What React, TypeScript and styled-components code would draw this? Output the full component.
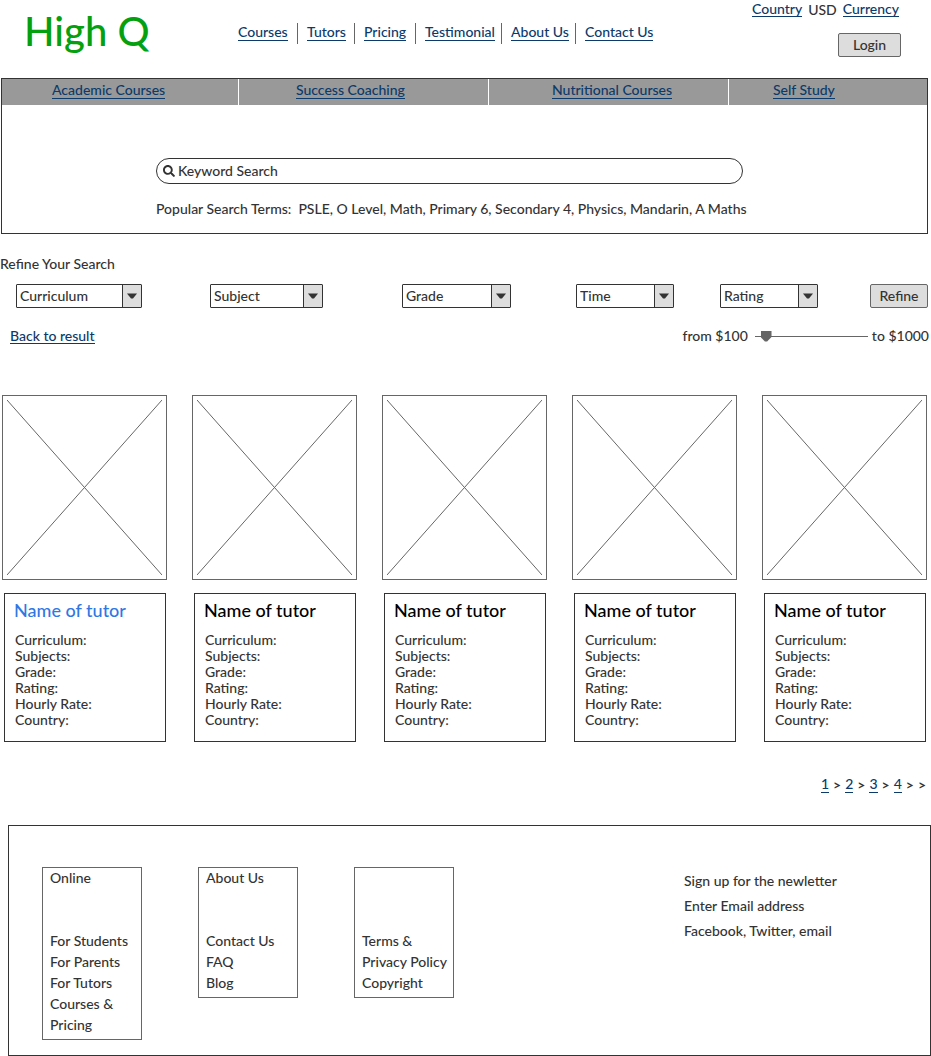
import React from "react";
import styled, { createGlobalStyle } from "styled-components";
import { FaSearch } from "react-icons/fa";

const ink = "#333333";
const line = "#666666";
const link = "#0b3a6b";
const fill = "#dddddd";

const GlobalStyle = createGlobalStyle`
  * { box-sizing: border-box; }
  body {
    margin: 0;
    background: #ffffff;
    color: ${ink};
    font-family: Lato, "Liberation Sans", sans-serif;
    font-size: 14px;
    font-weight: 500;
    line-height: 16px;
  }
  button, input, select { font: inherit; color: inherit; }
  ul { list-style: none; margin: 0; padding: 0; }
  h1, h2, h3, p { margin: 0; font-size: inherit; font-weight: inherit; }
`;

const Link = styled.a`
  color: ${link};
  text-decoration: none;
  border-bottom: 1px solid ${link};
  line-height: 14px;
  white-space: nowrap;
`;

const PlainLink = styled.a`
  color: inherit;
  text-decoration: none;
`;

const Button = styled.button<{ $width: number }>`
  width: ${(p) => p.$width}px;
  height: 24px;
  padding: 0;
  border: 1px solid ${line};
  border-radius: 2px;
  background: ${fill};
  line-height: 20px;
`;

const Header = styled.header`
  display: grid;
  grid-template-columns: 238px 1fr auto;
  height: 78px;
`;

const Logo = styled.h1`
  padding: 8px 0 0 24px;
  color: #05a010;
  font-size: 40px;
  line-height: 46px;
`;

const MainNav = styled.ul`
  display: grid;
  grid-template-columns: 60px 57px 61px 86px 74px auto;
  justify-content: start;
  padding-top: 23px;
`;

const MainNavItem = styled.li`
  height: 21px;
  padding-left: 9px;
  line-height: 18px;
  border-right: 1px solid ${line};
  &:first-child { padding-left: 0; }
  &:last-child { border-right: 0; }
`;

const Account = styled.div`
  display: flex;
  flex-direction: column;
  align-items: flex-end;
  gap: 15px;
  padding: 1px 30px 0 0;
`;

const Locale = styled.div`
  display: flex;
  align-items: center;
  gap: 6px;
  height: 17px;
  padding-right: 2px;
`;

const Hero = styled.section`
  margin: 0 3px 0 1px;
  height: 156px;
  border: 1px solid ${ink};
`;

const CategoryBar = styled.ul`
  display: grid;
  grid-template-columns: 237fr 250fr 240fr 198fr;
  height: 26px;
  background: #999999;
`;

const Category = styled.li<{ $inset: number }>`
  padding-left: ${(p) => p.$inset}px;
  line-height: 22px;
  border-right: 1px solid #ffffff;
  &:last-child { border-right: 0; }
`;

const SearchArea = styled.form`
  display: flex;
  flex-direction: column;
  gap: 17px;
  padding: 53px 184px 0 154px;
`;

const SearchBox = styled.label`
  display: flex;
  align-items: center;
  gap: 3px;
  height: 26px;
  padding: 0 12px 1px 6px;
  border: 1px solid ${ink};
  border-radius: 13px;
`;

const BareInput = styled.input`
  flex: 1;
  min-width: 0;
  padding: 0;
  border: 0;
  outline: 0;
  background: transparent;
  &::placeholder { color: ${ink}; opacity: 1; }
`;

const Terms = styled.p`
  white-space: pre;
`;

const Filters = styled.form`
  padding-top: 22px;
`;

const FilterRow = styled.div`
  display: grid;
  grid-template-columns: 194fr 192fr 174fr 144fr 150fr 58px;
  margin: 12px 3px 0 16px;
`;

const SelectBox = styled.div<{ $width: number }>`
  display: grid;
  grid-template-columns: 1fr 20px;
  width: ${(p) => p.$width}px;
  height: 24px;
  border: 1px solid ${ink};
  border-radius: 1px;
  background: linear-gradient(${fill}, ${fill}) right / 18px 100% no-repeat;
`;

const Select = styled.select`
  grid-area: 1 / 1 / 2 / 3;
  padding: 0 20px 1px 3px;
  border: 0;
  border-radius: 0;
  background: transparent;
  appearance: none;
  line-height: 20px;
`;

const Arrow = styled.span`
  grid-area: 1 / 2;
  display: flex;
  align-items: center;
  justify-content: center;
  margin-left: 1px;
  border-left: 1px solid ${ink};
  pointer-events: none;
`;

const PriceRow = styled.div`
  display: flex;
  align-items: center;
  justify-content: space-between;
  height: 18px;
  margin: 19px 2px 0 10px;
`;

const PriceRange = styled.label`
  display: flex;
  align-items: center;
`;

const Slider = styled.input`
  width: 113px;
  height: 11px;
  margin: 0 4px 0 7px;
  appearance: none;
  background: linear-gradient(${line}, ${line}) center / 100% 1px no-repeat;
  &::-webkit-slider-thumb {
    appearance: none;
    width: 11px;
    height: 11px;
    background: ${line};
    clip-path: polygon(0 0, 100% 0, 100% 60%, 60% 100%, 40% 100%, 0 60%);
  }
`;

const Tutors = styled.ul`
  display: grid;
  grid-template-columns: repeat(5, 1fr);
  gap: 25px;
  margin: 50px 4px 0 2px;
`;

const Photo = styled.div`
  height: 185px;
  padding: 4px;
  border: 1px solid ${line};
  svg { display: block; width: 100%; height: 100%; }
`;

const TutorCard = styled.article`
  height: 149px;
  margin: 13px 1px 0 2px;
  padding: 5px 9px 0 10px;
  border: 1px solid ${ink};
`;

const TutorName = styled.h3<{ $active: boolean }>`
  margin: 0 0 11px -1px;
  color: ${(p) => (p.$active ? "#2f78e4" : "#000000")};
  font-size: 18px;
  line-height: 22px;
`;

const Pagination = styled.nav`
  display: flex;
  justify-content: flex-end;
  gap: 4px;
  margin: 35px 5px 0 0;
`;

const Chevron = styled.span`
  font-weight: 700;
`;

const Footer = styled.footer`
  display: flex;
  align-items: flex-start;
  height: 231px;
  margin: 32px 0 0 8px;
  padding: 41px 98px 0 33px;
  border: 1px solid ${ink};
`;

const FooterColumns = styled.div`
  display: flex;
  flex: 1;
  align-items: flex-start;
  gap: 56px;
`;

const FooterColumn = styled.section`
  width: 100px;
  padding: 0 0 4px 7px;
  border: 1px solid ${line};
  line-height: 21px;
  white-space: nowrap;
`;

const ColumnTitle = styled.h2`
  height: 62px;
  line-height: 20px;
`;

const Newsletter = styled.form`
  display: flex;
  flex-direction: column;
  gap: 9px;
  width: 148px;
  padding-top: 6px;
  white-space: nowrap;
`;

const mainLinks = ["Courses", "Tutors", "Pricing", "Testimonial", "About Us", "Contact Us"];

const categories = [
  { name: "Academic Courses", inset: 50 },
  { name: "Success Coaching", inset: 57 },
  { name: "Nutritional Courses", inset: 63 },
  { name: "Self Study", inset: 44 },
];

const filters = [
  { name: "Curriculum", width: 126 },
  { name: "Subject", width: 113 },
  { name: "Grade", width: 109 },
  { name: "Time", width: 98 },
  { name: "Rating", width: 98 },
];

const details = ["Curriculum:", "Subjects:", "Grade:", "Rating:", "Hourly Rate:", "Country:"];

const footerColumns = [
  { title: "Online", items: ["For Students", "For Parents", "For Tutors", "Courses &", "Pricing"] },
  { title: "About Us", items: ["Contact Us", "FAQ", "Blog"] },
  { title: "", items: ["Terms &", "Privacy Policy", "Copyright"] },
];

function Tutor({ active }: { active: boolean }) {
  return (
    <li>
      <Photo>
        <svg viewBox="0 0 155 175" preserveAspectRatio="none" aria-hidden="true">
          <path d="M0 0L155 175M155 0L0 175" stroke={line} strokeWidth="1" fill="none" />
        </svg>
      </Photo>
      <TutorCard>
        <TutorName $active={active}>Name of tutor</TutorName>
        <ul>
          {details.map((d) => (
            <li key={d}>{d}</li>
          ))}
        </ul>
      </TutorCard>
    </li>
  );
}

export default function App() {
  return (
    <>
      <GlobalStyle />
      <Header>
        <Logo>High Q</Logo>
        <nav>
          <MainNav>
            {mainLinks.map((l) => (
              <MainNavItem key={l}>
                <Link href="#">{l}</Link>
              </MainNavItem>
            ))}
          </MainNav>
        </nav>
        <Account>
          <Locale>
            <Link href="#">Country</Link>
            <span>USD</span>
            <Link href="#">Currency</Link>
          </Locale>
          <Button type="button" $width={63}>Login</Button>
        </Account>
      </Header>

      <main>
        <Hero>
          <CategoryBar>
            {categories.map((c) => (
              <Category key={c.name} $inset={c.inset}>
                <Link href="#">{c.name}</Link>
              </Category>
            ))}
          </CategoryBar>
          <SearchArea>
            <SearchBox>
              <FaSearch size={12} aria-hidden="true" />
              <BareInput type="text" aria-label="Keyword Search" placeholder="Keyword Search" />
            </SearchBox>
            <Terms>
              {"Popular Search Terms:  PSLE, O Level, Math, Primary 6, Secondary 4, Physics, Mandarin, A Maths"}
            </Terms>
          </SearchArea>
        </Hero>

        <Filters>
          <h2>Refine Your Search</h2>
          <FilterRow>
            {filters.map((f) => (
              <SelectBox key={f.name} $width={f.width}>
                <Select aria-label={f.name}>
                  <option>{f.name}</option>
                </Select>
                <Arrow>
                  <svg width="10" height="6" viewBox="0 0 10 6" aria-hidden="true">
                    <path d="M0 0.5H10L6 5.5H4Z" fill={ink} />
                  </svg>
                </Arrow>
              </SelectBox>
            ))}
            <Button type="button" $width={58}>Refine</Button>
          </FilterRow>
          <PriceRow>
            <Link href="#">Back to result</Link>
            <PriceRange>
              <span>from $100</span>
              <Slider type="range" min={100} max={1000} step={10} defaultValue={150} aria-label="Hourly price" />
              <span>to $1000</span>
            </PriceRange>
          </PriceRow>
        </Filters>

        <Tutors>
          {[0, 1, 2, 3, 4].map((i) => (
            <Tutor key={i} active={i === 0} />
          ))}
        </Tutors>

        <Pagination aria-label="Pages">
          {[1, 2, 3, 4].map((n) => (
            <React.Fragment key={n}>
              <Link href="#">{n}</Link>
              <Chevron>&gt;</Chevron>
            </React.Fragment>
          ))}
          <Chevron>&gt;</Chevron>
        </Pagination>
      </main>

      <Footer>
        <FooterColumns>
          {footerColumns.map((c) => (
            <FooterColumn key={c.items[0]}>
              <ColumnTitle>{c.title}</ColumnTitle>
              <ul>
                {c.items.map((item) => (
                  <li key={item}>
                    <PlainLink href="#">{item}</PlainLink>
                  </li>
                ))}
              </ul>
            </FooterColumn>
          ))}
        </FooterColumns>
        <Newsletter>
          <label htmlFor="email">Sign up for the newletter</label>
          <BareInput id="email" type="email" placeholder="Enter Email address" />
          <p>Facebook, Twitter, email</p>
        </Newsletter>
      </Footer>
    </>
  );
}
